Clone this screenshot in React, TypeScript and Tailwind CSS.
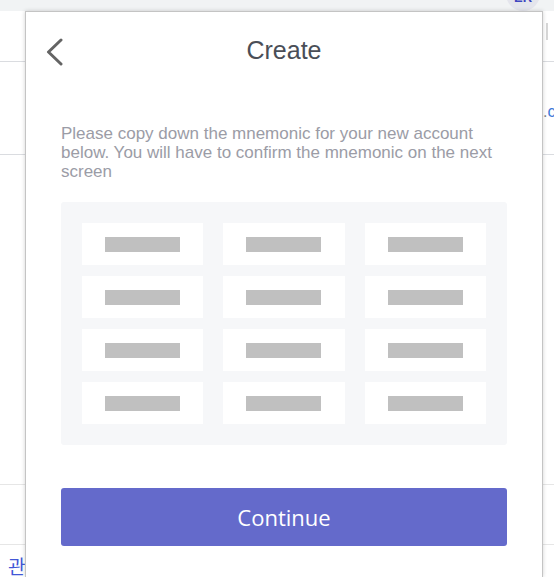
import React from "react";

const rows = [0, 1, 2, 3];
const cols = [0, 1, 2];

export default function App() {
  return (
    <div
      className="relative h-[577px] w-[554px] overflow-hidden bg-white"
      style={{ fontFamily: '"Liberation Sans", Arial, sans-serif' }}
    >
      {/* Background page */}
      <div className="flex h-[11px] items-end justify-end overflow-hidden bg-[#f1f3f4] pr-[14px]">
        <div className="flex h-[34px] w-[34px] shrink-0 items-end justify-center rounded-full bg-[#e4e5ec] pb-[7px]">
          <span className="text-[13px] font-bold leading-none text-[#3f46c0]">ER</span>
        </div>
      </div>
      <div className="h-[51px] border-b border-[#dadce0] pl-[546px] pt-[12px]">
        <div className="h-[17px] w-[2px] bg-[#d6d6d6]" />
      </div>
      <div className="flex h-[93px] items-center border-b border-[#dadce0] pl-[543px] pt-[8px]">
        <span className="whitespace-nowrap text-[16px]">
          <span className="text-[#80868b]">.</span>
          <span className="text-[#3b78d8]">com</span>
        </span>
      </div>
      <div className="h-[330px] border-b border-[#e6e6e6]" />
      <div className="h-[60px] border-b border-[#e6e6e6]" />
      <div
        className="pl-[8px] pt-[10px] text-[19px] leading-[22px] text-[#4257d6]"
        style={{ fontFamily: '"Noto Sans CJK KR", sans-serif' }}
      >
        관리
      </div>

      {/* Popup */}
      <div className="absolute bottom-0 left-[25px] top-[11px] w-[518px] border border-b-0 border-[#c4c4c4] bg-white shadow-[0_0_4px_rgba(0,0,0,0.18)]">
        {/* Header */}
        <div className="mt-[22px] grid h-[30px] grid-cols-[24px_1fr_24px] items-center px-[20px]">
          <svg width="17" height="28" viewBox="0 0 17 28" className="mt-[4px]">
            <polyline
              points="15,2 2.5,14 15,26"
              fill="none"
              stroke="#646464"
              strokeWidth="3"
              strokeLinecap="round"
              strokeLinejoin="round"
            />
          </svg>
          <h1 className="text-center text-[25px] leading-[30px] text-[#4a4e57]">Create</h1>
          <div />
        </div>

        <div className="px-[35px]">
          <p className="mt-[60px] text-[17px] leading-[19px] text-[#9b9ca6]">
            Please copy down the mnemonic for your new account below. You will have to confirm the mnemonic on the next screen
          </p>

          {/* Mnemonic grid */}
          <div className="mt-[21px] grid grid-cols-3 gap-x-[20px] gap-y-[11px] rounded-[3px] bg-[#f6f7f9] p-[21px]">
            {rows.map((r) =>
              cols.map((c) => (
                <div key={`${r}-${c}`} className="flex h-[42px] items-center justify-center bg-white">
                  <div className="h-[15px] w-[75px] bg-[#c0c0c0]" />
                </div>
              )),
            )}
          </div>

          <button
            className="mt-[43px] flex h-[58px] w-full items-center justify-center rounded-[3px] bg-[#646acb] text-[22px] text-white"
            style={{ fontFamily: '"Open Sans", sans-serif' }}
          >
            Continue
          </button>
        </div>
      </div>
    </div>
  );
}
